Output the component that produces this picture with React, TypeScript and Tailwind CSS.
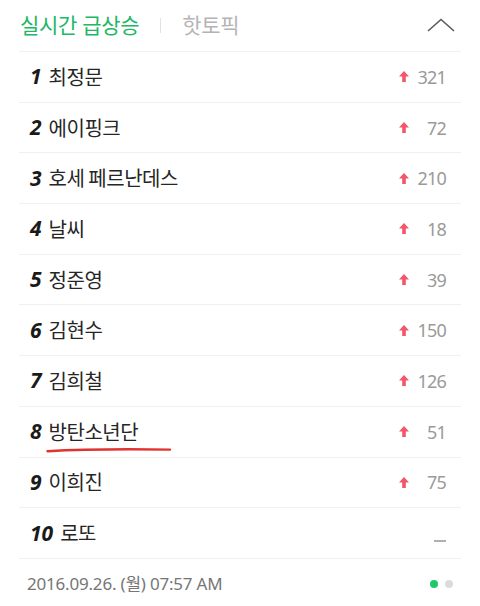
const rows: { rank: number; name: string; delta: string | null }[] = [
  { rank: 1, name: '최정문', delta: '321' },
  { rank: 2, name: '에이핑크', delta: '72' },
  { rank: 3, name: '호세 페르난데스', delta: '210' },
  { rank: 4, name: '날씨', delta: '18' },
  { rank: 5, name: '정준영', delta: '39' },
  { rank: 6, name: '김현수', delta: '150' },
  { rank: 7, name: '김희철', delta: '126' },
  { rank: 8, name: '방탄소년단', delta: '51' },
  { rank: 9, name: '이희진', delta: '75' },
  { rank: 10, name: '로또', delta: null },
];

function UpArrow() {
  return (
    <svg width="10" height="11" viewBox="0 0 10 11" className="shrink-0">
      <path d="M5 0 L10 5.5 H6.8 V11 H3.2 V5.5 H0 Z" fill="#f1566a" />
    </svg>
  );
}

export default function App() {
  return (
    <div
      className="w-[480px] h-[606px] bg-white overflow-hidden"
      style={{ fontFamily: '"Noto Sans", "Noto Sans CJK KR", sans-serif' }}
    >
      <div className="mx-[19px]">
        {/* Header tabs */}
        <div className="h-[52px] flex items-center border-b border-[#f0f0f0]">
          <span className="ml-px text-[21px] text-[#21b764] tracking-[-0.3px]">실시간 급상승</span>
          <span className="ml-[21px] mr-[21px] w-px h-[15px] bg-[#e2e2e2]" />
          <span className="text-[21px] text-[#b4b4b4] tracking-[-0.3px]">핫토픽</span>
          <svg width="28" height="14" viewBox="0 0 28 14" className="ml-auto mr-[6px] -mt-[2px]">
            <path d="M1 13 L14 1.5 L27 13" fill="none" stroke="#5a5a5a" strokeWidth="1.6" />
          </svg>
        </div>

        {/* Ranking list */}
        {rows.map((r) => (
          <div key={r.rank} className="h-[50.7px] flex items-center border-b border-[#f0f0f0]">
            <div className="relative flex items-center pl-[11px] gap-[7px]">
              <span className="text-[21px] font-bold italic text-[#1a1a1a] leading-none">{r.rank}</span>
              <span
                className="text-[20px] text-[#262626] leading-none tracking-[-0.5px]"
                style={{ fontFamily: '"Noto Sans CJK KR", sans-serif' }}
              >
                {r.name}
              </span>
              {r.rank === 8 && (
                <svg
                  width="126"
                  height="6"
                  viewBox="0 0 126 6"
                  className="absolute left-[27px] top-[26px]"
                >
                  <path
                    d="M1.5 4.2 C30 2.6 70 1.8 124 2.6"
                    fill="none"
                    stroke="#e0322e"
                    strokeWidth="2.4"
                    strokeLinecap="round"
                  />
                </svg>
              )}
            </div>
            <div className="ml-auto mr-[15px] flex items-center">
              {r.delta ? (
                <>
                  <UpArrow />
                  <span className="w-[37px] text-right text-[18px] text-[#9a9a9a] leading-none tracking-[-0.8px]">
                    {r.delta}
                  </span>
                </>
              ) : (
                <span className="mt-[16px] w-[12px] h-[2px] bg-[#b0b0b0]" />
              )}
            </div>
          </div>
        ))}

        {/* Footer */}
        <div className="h-[47px] flex items-center pt-[3px]">
          <span className="pl-[8px] text-[17px] text-[#767676] tracking-[-0.2px]">
            2016.09.26. (월) 07:57 AM
          </span>
          <div className="ml-auto mr-[8px] flex items-center gap-[7px]">
            <span className="w-[8px] h-[8px] rounded-full bg-[#1fc86a]" />
            <span className="w-[8px] h-[8px] rounded-full bg-[#dcdcdc]" />
          </div>
        </div>
      </div>
    </div>
  );
}
